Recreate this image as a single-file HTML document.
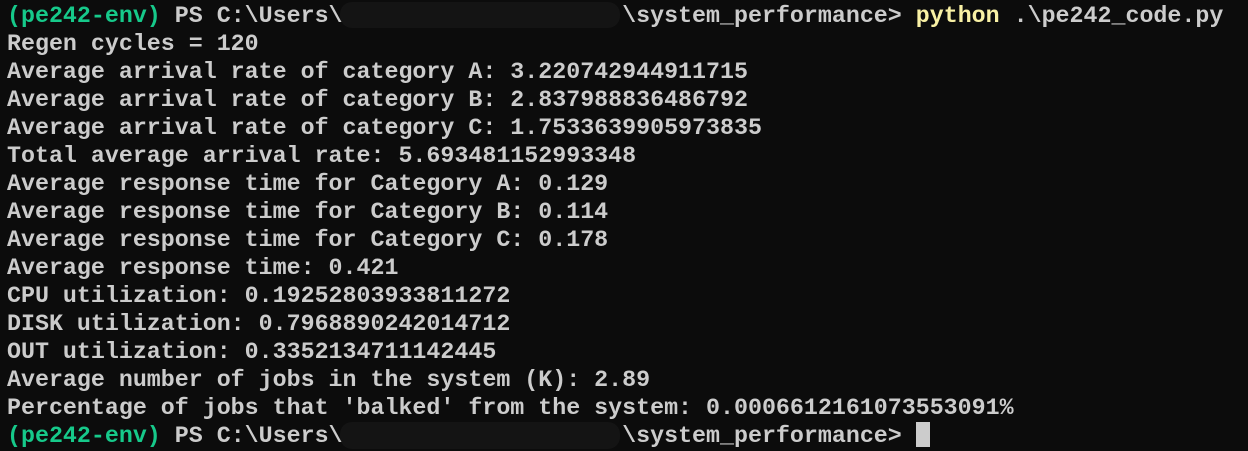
<!DOCTYPE html>
<html><head><meta charset="utf-8"><style>
html,body{margin:0;padding:0;background:#0c0c0c;width:1248px;height:451px;overflow:hidden}
pre{margin:0;position:absolute;left:7px;top:2px;font-family:"Liberation Mono",monospace;font-size:23.3px;line-height:28px;color:#cccccc;font-weight:bold;letter-spacing:0}
.g{color:#16c98a}.y{color:#f9f1a5}
.cur{display:inline-block;width:14px;height:25px;background:#cccccc;vertical-align:-5px}
.blob{position:absolute;background:#141414;border-radius:12px}
</style></head><body>
<div class="blob" style="left:340px;top:2px;width:280px;height:26px"></div>
<div class="blob" style="left:340px;top:422px;width:280px;height:27px"></div>
<pre><span class="g">(pe242-env)</span> PS C:\Users\                    \system_performance&gt; <span class="y">python</span> .\pe242_code.py
Regen cycles = 120
Average arrival rate of category A: 3.220742944911715
Average arrival rate of category B: 2.837988836486792
Average arrival rate of category C: 1.7533639905973835
Total average arrival rate: 5.693481152993348
Average response time for Category A: 0.129
Average response time for Category B: 0.114
Average response time for Category C: 0.178
Average response time: 0.421
CPU utilization: 0.19252803933811272
DISK utilization: 0.7968890242014712
OUT utilization: 0.3352134711142445
Average number of jobs in the system (K): 2.89
Percentage of jobs that 'balked' from the system: 0.0006612161073553091%
<span class="g">(pe242-env)</span> PS C:\Users\                    \system_performance&gt; <span class="cur"></span></pre>
</body></html>
